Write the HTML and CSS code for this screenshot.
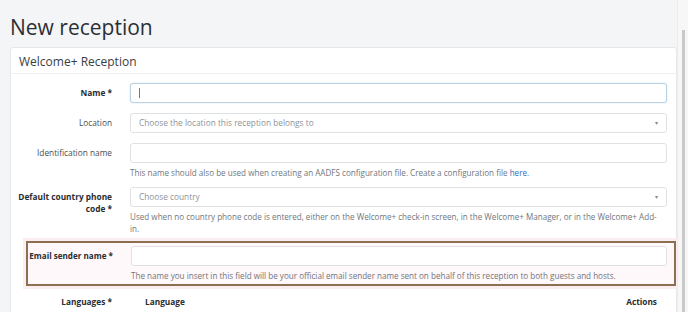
FILE: index.html
```html
<!DOCTYPE html>
<html lang="en">
<head>
  <meta charset="UTF-8" />
  <title>New reception</title>
  <link rel="stylesheet" href="styles.css">
</head>
<body>

  <h1 class="page-title">New reception</h1>

  <div class="card">
    <div class="card-header">Welcome+ Reception</div>

    <div class="card-body">
      <!-- Name -->
      <div class="form-row">
        <label class="form-label required">Name *</label>
        <div class="form-field">
          <div class="input focused"><span class="caret"></span></div>
        </div>
      </div>

      <!-- Location -->
      <div class="form-row">
        <label class="form-label">Location</label>
        <div class="form-field">
          <div class="input select">
            <span class="placeholder">Choose the location this reception belongs to</span>
            <span class="arrow">&#9662;</span>
          </div>
        </div>
      </div>

      <!-- Identification name -->
      <div class="form-row with-help">
        <label class="form-label">Identification name</label>
        <div class="form-field">
          <div class="input"></div>
          <p class="help">This name should also be used when creating an AADFS configuration file. Create a configuration file <a href="#">here.</a></p>
        </div>
      </div>

      <!-- Default country -->
      <div class="form-row before-highlight">
        <label class="form-label required">Default country phone code *</label>
        <div class="form-field">
          <div class="input select">
            <span class="placeholder">Choose country</span>
            <span class="arrow">&#9662;</span>
          </div>
          <p class="help">Used when no country phone code is entered, either on the Welcome+ check-in screen, in the Welcome+ Manager, or in the Welcome+ Add-in.</p>
        </div>
      </div>

      <!-- Email sender name (highlighted) -->
      <div class="form-row highlight">
        <label class="form-label required">Email sender name *</label>
        <div class="form-field">
          <div class="input"></div>
          <p class="help">The name you insert in this field will be your official email sender name sent on behalf of this reception to both guests and hosts.</p>
        </div>
      </div>

      <!-- Languages -->
      <div class="form-row">
        <label class="form-label required">Languages *</label>
        <div class="form-field">
          <table class="lang-table">
            <thead>
              <tr>
                <th>Language</th>
                <th class="right">Actions</th>
              </tr>
            </thead>
          </table>
        </div>
      </div>
    </div>
  </div>

  <div class="scrollbar"><div class="thumb"></div></div>

</body>
</html>
```

FILE: styles.css
```css
body {
  font-family: 'Open Sans', 'Noto Sans', sans-serif;
  margin: 0;
  padding: 0 0 0 10px;
  background: #f4f5f7;
  color: #333;
  overflow: hidden;
}

.page-title {
  font-size: 21px;
  font-weight: 400;
  line-height: 25px;
  margin: 15px 0 7px 0;
  color: #2b2f33;
}

/* Karta */
.card {
  width: 667px;
  background: white;
  border: 1px solid #e6e8eb;
  border-radius: 3px;
  box-sizing: border-box;
}

.card-header {
  height: 26px;
  line-height: 24px;
  padding: 2px 0 0 8px;
  box-sizing: border-box;
  font-size: 12px;
  color: #3a3e42;
  border-bottom: 1px solid #eef0f2;
}

.card-body {
  padding: 9px 9px 0 0;
}

/* Riadky formulára */
.form-row {
  display: grid;
  grid-template-columns: 101px 1fr;
  column-gap: 18px;
  margin-bottom: 10px;
}

.form-row.with-help {
  margin-bottom: 8px;
}

.form-row.before-highlight {
  margin-bottom: 6px;
}

.form-label {
  text-align: right;
  font-size: 8.3px;
  line-height: 12px;
  padding-top: 4px;
  color: #4a4e52;
}

.form-label.required {
  font-weight: 700;
  color: #2a2d30;
}

.input {
  height: 20px;
  border: 1px solid #dfe2e5;
  border-radius: 3px;
  box-sizing: border-box;
  display: flex;
  align-items: center;
  padding: 0 8px;
  background: white;
}

.input.focused {
  border-color: #b9d3e3;
  box-shadow: 0 0 2px rgba(120,170,210,0.35);
}

.caret {
  width: 1px;
  height: 10px;
  background: #777;
}

.select {
  justify-content: space-between;
}

.placeholder {
  font-size: 8.3px;
  line-height: 12px;
  color: #8d9399;
}

.arrow {
  font-size: 6px;
  color: #888;
}

.help {
  margin: 4px 0 0 0;
  padding-right: 4px;
  font-size: 8.1px;
  line-height: 12px;
  color: #70767c;
}

.help a {
  color: #3b6db3;
  text-decoration: none;
}

/* Zvýraznený riadok */
.form-row.highlight {
  margin: 0 -9px 6px 15px;
  grid-template-columns: 85px 1fr;
  border: 2px solid #8c6e50;
  padding: 3px 7px 2px 0;
  background: #fef8fa;
  box-shadow: 0 0 0 3px #fcedf1;
}

.form-row.highlight .form-label {
  white-space: nowrap;
  font-size: 8.1px;
}

/* Tabuľka jazykov */
.lang-table {
  width: 100%;
  border-collapse: collapse;
  font-size: 8.3px;
}

.lang-table th {
  text-align: left;
  padding: 4px 10px 5px 15px;
  border-bottom: 1px solid #e3e6e9;
  color: #2a2d30;
  font-weight: 700;
}

.lang-table th.right {
  text-align: right;
}

/* Posuvník */
.scrollbar {
  position: fixed;
  top: 0;
  right: 0;
  width: 10px;
  height: 100%;
  background: #f7f7f7;
  border-left: 1px solid #ececec;
}

.scrollbar .thumb {
  margin: 30px 0 0 4px;
  width: 3px;
  height: 290px;
  background: #c9c9c9;
}
```
